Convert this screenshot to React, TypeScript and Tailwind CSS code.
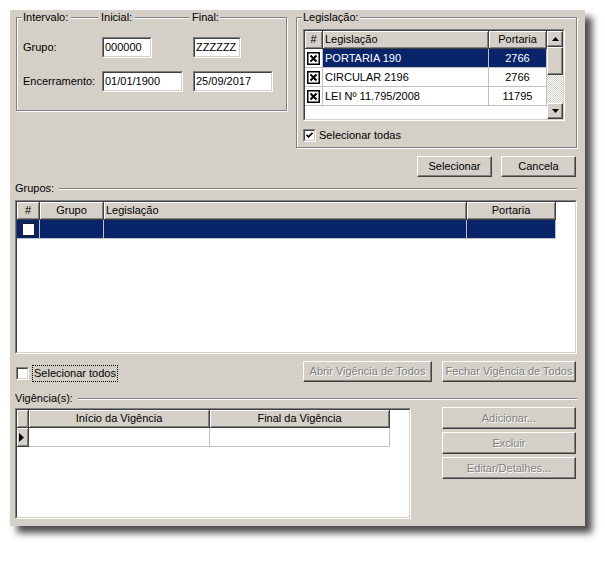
import type { ReactNode } from 'react';

const LEGISLACOES = [
  { nome: 'PORTARIA 190', portaria: '2766' },
  { nome: 'CIRCULAR 2196', portaria: '2766' },
  { nome: 'LEI Nº 11.795/2008', portaria: '11795' },
];

const RAISED =
  'bg-[#d4d0c8] border border-t-white border-l-white border-r-[#404040] border-b-[#404040] shadow-[inset_-1px_-1px_#808080]';

function Sunken({ className, children }: { className: string; children?: ReactNode }) {
  return (
    <div className={`border border-t-[#808080] border-l-[#808080] border-r-white border-b-white ${className}`}>
      <div className="h-full border border-t-[#404040] border-l-[#404040] border-r-[#d4d0c8] border-b-[#d4d0c8] bg-white">
        {children}
      </div>
    </div>
  );
}

function Field({ value, className }: { value: string; className: string }) {
  return (
    <Sunken className={`h-[21px] ${className}`}>
      <div className="px-[1px] leading-[17px]">{value}</div>
    </Sunken>
  );
}

function Btn({ label, className, disabled }: { label: string; className: string; disabled?: boolean }) {
  return (
    <button
      className={`h-[21px] flex items-center justify-center ${RAISED} ${className} ${
        disabled ? 'text-[#808080] [text-shadow:1px_1px_0_#fff]' : 'text-black'
      }`}
    >
      {label}
    </button>
  );
}

function CheckBox({ checked }: { checked?: boolean }) {
  return (
    <Sunken className="w-[13px] h-[13px] shrink-0">
      <div className="h-full flex items-center justify-center">
        {checked && (
          <svg width="7" height="7" viewBox="0 0 7 7">
            <path d="M0.5 2.8 L2.5 4.8 L6.5 0.8" fill="none" stroke="black" strokeWidth="1.6" />
          </svg>
        )}
      </div>
    </Sunken>
  );
}

function GridCheck() {
  return (
    <svg width="13" height="13" viewBox="0 0 13 13">
      <rect x="0.75" y="0.75" width="11.5" height="11.5" fill="white" stroke="black" strokeWidth="1.5" />
      <path d="M3.5 3.5 L9.5 9.5 M9.5 3.5 L3.5 9.5" stroke="black" strokeWidth="2" />
    </svg>
  );
}

function HCell({ className, children }: { className: string; children?: ReactNode }) {
  return (
    <div
      className={`h-full shrink-0 flex items-center bg-[#d4d0c8] border-r border-b border-[#404040] shadow-[inset_1px_1px_#fff,inset_-1px_-1px_#808080] ${className}`}
    >
      {children}
    </div>
  );
}

function Separator({ label }: { label: string }) {
  return (
    <div className="flex items-center h-[13px] leading-[13px]">
      <span>{label}</span>
      <div className="flex-1 ml-[5px] h-[2px] border-t border-t-[#808080] border-b border-b-white" />
    </div>
  );
}

function Etch({ className }: { className: string }) {
  return <div className={`h-[2px] border-t border-t-[#808080] border-b border-b-white ${className}`} />;
}

function ScrollButton({ down }: { down?: boolean }) {
  return (
    <div className={`h-[16px] flex items-center justify-center ${RAISED}`}>
      <svg width="7" height="4" viewBox="0 0 7 4">
        <polygon points={down ? '0,0 7,0 3.5,4' : '3.5,0 7,4 0,4'} fill="black" />
      </svg>
    </div>
  );
}

export default function App() {
  return (
    <div className="min-h-screen bg-white pt-[10px] pl-[10px] font-['Liberation_Sans',Arial,sans-serif] text-[11px] text-black">
      <div className="w-[575px] h-[516px] bg-[#d4d0c8] flex flex-col pl-[5px] pr-[8px] shadow-[7px_7px_7px_rgba(0,0,0,0.7)]">
        {/* Intervalo + Legislação */}
        <div className="flex items-start mt-[1px]">
          <fieldset className="ml-[1px] w-[271px] pl-[6px] pt-[13px] pb-[18px] border border-[#808080] shadow-[inset_1px_1px_#fff,1px_1px_#fff]">
            <legend className="-ml-[1px] px-[1px] bg-[#d4d0c8] leading-[13px] flex items-center">
              <div className="w-[78px] flex items-center">
                <span>Intervalo:</span>
                <Etch className="flex-1 mx-[3px]" />
              </div>
              <div className="w-[91px] flex items-center">
                <span>Inicial:</span>
                <Etch className="flex-1 mx-[3px]" />
              </div>
              <span>Final:</span>
            </legend>
            <div className="grid grid-cols-[79px_91px_auto] gap-y-[13px] items-center">
              <span>Grupo:</span>
              <Field value="000000" className="w-[50px]" />
              <Field value="ZZZZZZ" className="w-[48px]" />
              <span>Encerramento:</span>
              <Field value="01/01/1900" className="w-[81px]" />
              <Field value="25/09/2017" className="w-[80px]" />
            </div>
          </fieldset>

          <fieldset className="ml-[9px] w-[281px] pl-[6px] pt-[5px] pb-[5px] border border-[#808080] shadow-[inset_1px_1px_#fff,1px_1px_#fff]">
            <legend className="-ml-[1px] px-[1px] bg-[#d4d0c8] leading-[13px]">Legislação:</legend>
            <Sunken className="w-[262px] h-[92px]">
              <div className="h-full flex">
                <div className="flex-1 flex flex-col">
                  <div className="flex h-[18px]">
                    <HCell className="w-[18px] justify-center">#</HCell>
                    <HCell className="w-[166px] pl-[2px]">Legislação</HCell>
                    <HCell className="w-[58px] justify-center">Portaria</HCell>
                  </div>
                  {LEGISLACOES.map((l, i) => {
                    const sel = i === 0;
                    return (
                      <div key={l.nome} className="flex h-[19px]">
                        <div className="w-[18px] shrink-0 flex items-center justify-center bg-white border-r border-b border-[#c0c0c0]">
                          <GridCheck />
                        </div>
                        <div
                          className={`w-[166px] shrink-0 flex items-center pl-[2px] border-r border-b border-[#c0c0c0] ${
                            sel ? 'bg-[#0a246a] text-white' : 'bg-white'
                          }`}
                        >
                          {l.nome}
                        </div>
                        <div
                          className={`w-[58px] shrink-0 flex items-center justify-center border-r border-b border-[#c0c0c0] ${
                            sel ? 'bg-[#0a246a] text-white' : 'bg-white'
                          }`}
                        >
                          {l.portaria}
                        </div>
                      </div>
                    );
                  })}
                </div>
                <div className="w-[16px] flex flex-col">
                  <ScrollButton />
                  <div className={`h-[28px] ${RAISED}`} />
                  <div className="flex-1 bg-[repeating-conic-gradient(#fff_0_25%,#d4d0c8_0_50%)] bg-[length:2px_2px]" />
                  <ScrollButton down />
                </div>
              </div>
            </Sunken>
            <div className="flex items-center mt-[8px] h-[13px]">
              <CheckBox checked />
              <span className="ml-[3px]">Selecionar todas</span>
            </div>
          </fieldset>
        </div>

        <div className="flex justify-end gap-[9px] mt-[8px] mr-[1px]">
          <Btn label="Selecionar" className="w-[75px]" />
          <Btn label="Cancela" className="w-[75px]" />
        </div>

        {/* Grupos */}
        <div className="mt-[5px]">
          <Separator label="Grupos:" />
        </div>
        <Sunken className="mt-[5px] h-[154px]">
          <div className="flex h-[18px]">
            <HCell className="w-[23px] justify-center">#</HCell>
            <HCell className="w-[64px] justify-center">Grupo</HCell>
            <HCell className="w-[363px] pl-[2px]">Legislação</HCell>
            <HCell className="w-[89px] justify-center">Portaria</HCell>
          </div>
          <div className="flex h-[19px] bg-white">
            <div className="w-[23px] flex items-center justify-center bg-[#0a246a] border-r border-b border-[#c0c0c0]">
              <svg width="13" height="13" viewBox="0 0 13 13">
                <rect x="0.5" y="0.5" width="12" height="12" fill="white" stroke="#202020" />
              </svg>
            </div>
            <div className="w-[64px] bg-[#0a246a] border-r border-b border-[#c0c0c0]" />
            <div className="w-[363px] bg-[#0a246a] border-r border-b border-[#c0c0c0]" />
            <div className="w-[89px] bg-[#0a246a] border-r border-b border-[#c0c0c0]" />
          </div>
        </Sunken>

        <div className="flex h-[21px] mt-[7px] mr-[1px]">
          <div className="self-end flex items-center h-[17px] ml-[1px]">
            <CheckBox />
            <span className="ml-[3px] h-[17px] leading-[15px] px-[1px] border border-dotted border-black">
              Selecionar todos
            </span>
          </div>
          <Btn label="Abrir Vigência de Todos" className="ml-auto w-[129px]" disabled />
          <Btn label="Fechar Vigência de Todos" className="ml-[10px] w-[134px]" disabled />
        </div>

        {/* Vigência(s) */}
        <div className="mt-[10px]">
          <Separator label="Vigência(s):" />
        </div>
        <div className="flex items-start mt-[2px]">
          <Sunken className="mt-[1px] w-[396px] h-[111px]">
            <div className="flex h-[18px]">
              <HCell className="w-[12px]" />
              <HCell className="w-[181px] justify-center">Início da Vigência</HCell>
              <HCell className="w-[180px] justify-center">Final da Vigência</HCell>
            </div>
            <div className="flex h-[19px]">
              <HCell className="w-[12px] pl-[2px]">
                <svg width="5" height="9" viewBox="0 0 5 9">
                  <polygon points="0,0 5,4.5 0,9" fill="black" />
                </svg>
              </HCell>
              <div className="w-[181px] bg-white border-r border-b border-[#c0c0c0]" />
              <div className="w-[180px] bg-white border-r border-b border-[#c0c0c0]" />
            </div>
          </Sunken>
          <div className="ml-auto mr-[1px] flex flex-col gap-[3px]">
            <Btn label="Adicionar..." className="w-[134px] h-[22px]" disabled />
            <Btn label="Excluir" className="w-[134px] h-[22px]" disabled />
            <Btn label="Editar/Detalhes..." className="w-[134px] h-[22px]" disabled />
          </div>
        </div>
      </div>
    </div>
  );
}
